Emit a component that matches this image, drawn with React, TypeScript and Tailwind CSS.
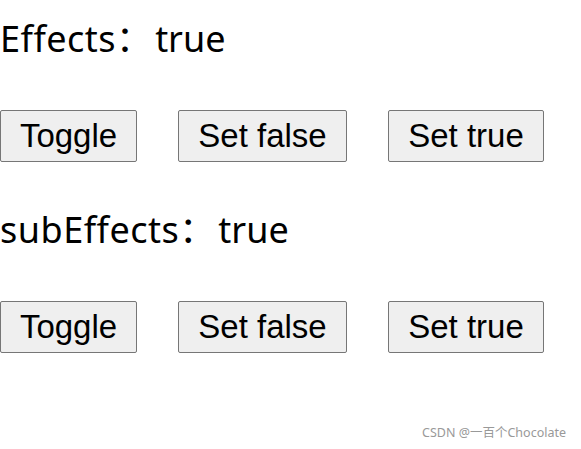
export default function App() {
  const section = (label: string, value: boolean) => (
    <div className="flex flex-col">
      <h2 className="text-[36px] font-normal leading-[52px] text-black [font-variant-ligatures:none] [font-family:'Noto_Sans','Noto_Sans_CJK_SC',sans-serif]">
        <span className="tracking-[0.5px]">{label}</span>
        <span className="pr-[3px]">：</span>
        {String(value)}
      </h2>
      <div className="mt-[45px] flex gap-[41px]">
        <button className="h-[52px] w-[137px] rounded-[2px] border border-[#767676] bg-[#efefef] text-[33px] text-black [font-family:'Liberation_Sans',Arial,sans-serif]">
          Toggle
        </button>
        <button className="h-[52px] w-[169px] rounded-[2px] border border-[#767676] bg-[#efefef] text-[33px] text-black [font-family:'Liberation_Sans',Arial,sans-serif]">
          Set false
        </button>
        <button className="h-[52px] w-[156px] rounded-[2px] border border-[#767676] bg-[#efefef] text-[33px] text-black [font-family:'Liberation_Sans',Arial,sans-serif]">
          Set true
        </button>
      </div>
    </div>
  );

  return (
    <div className="relative h-[449px] w-[581px] bg-white">
      <div className="flex flex-col gap-[42px] pt-[13px]">
        {section("Effects", true)}
        {section("subEffects", true)}
      </div>
      <span className="absolute right-[15px] top-[425px] text-[12.5px] leading-[16px] text-[#999] [font-family:'Noto_Sans','Noto_Sans_CJK_SC',sans-serif]">
        CSDN @一百个Chocolate
      </span>
    </div>
  );
}
